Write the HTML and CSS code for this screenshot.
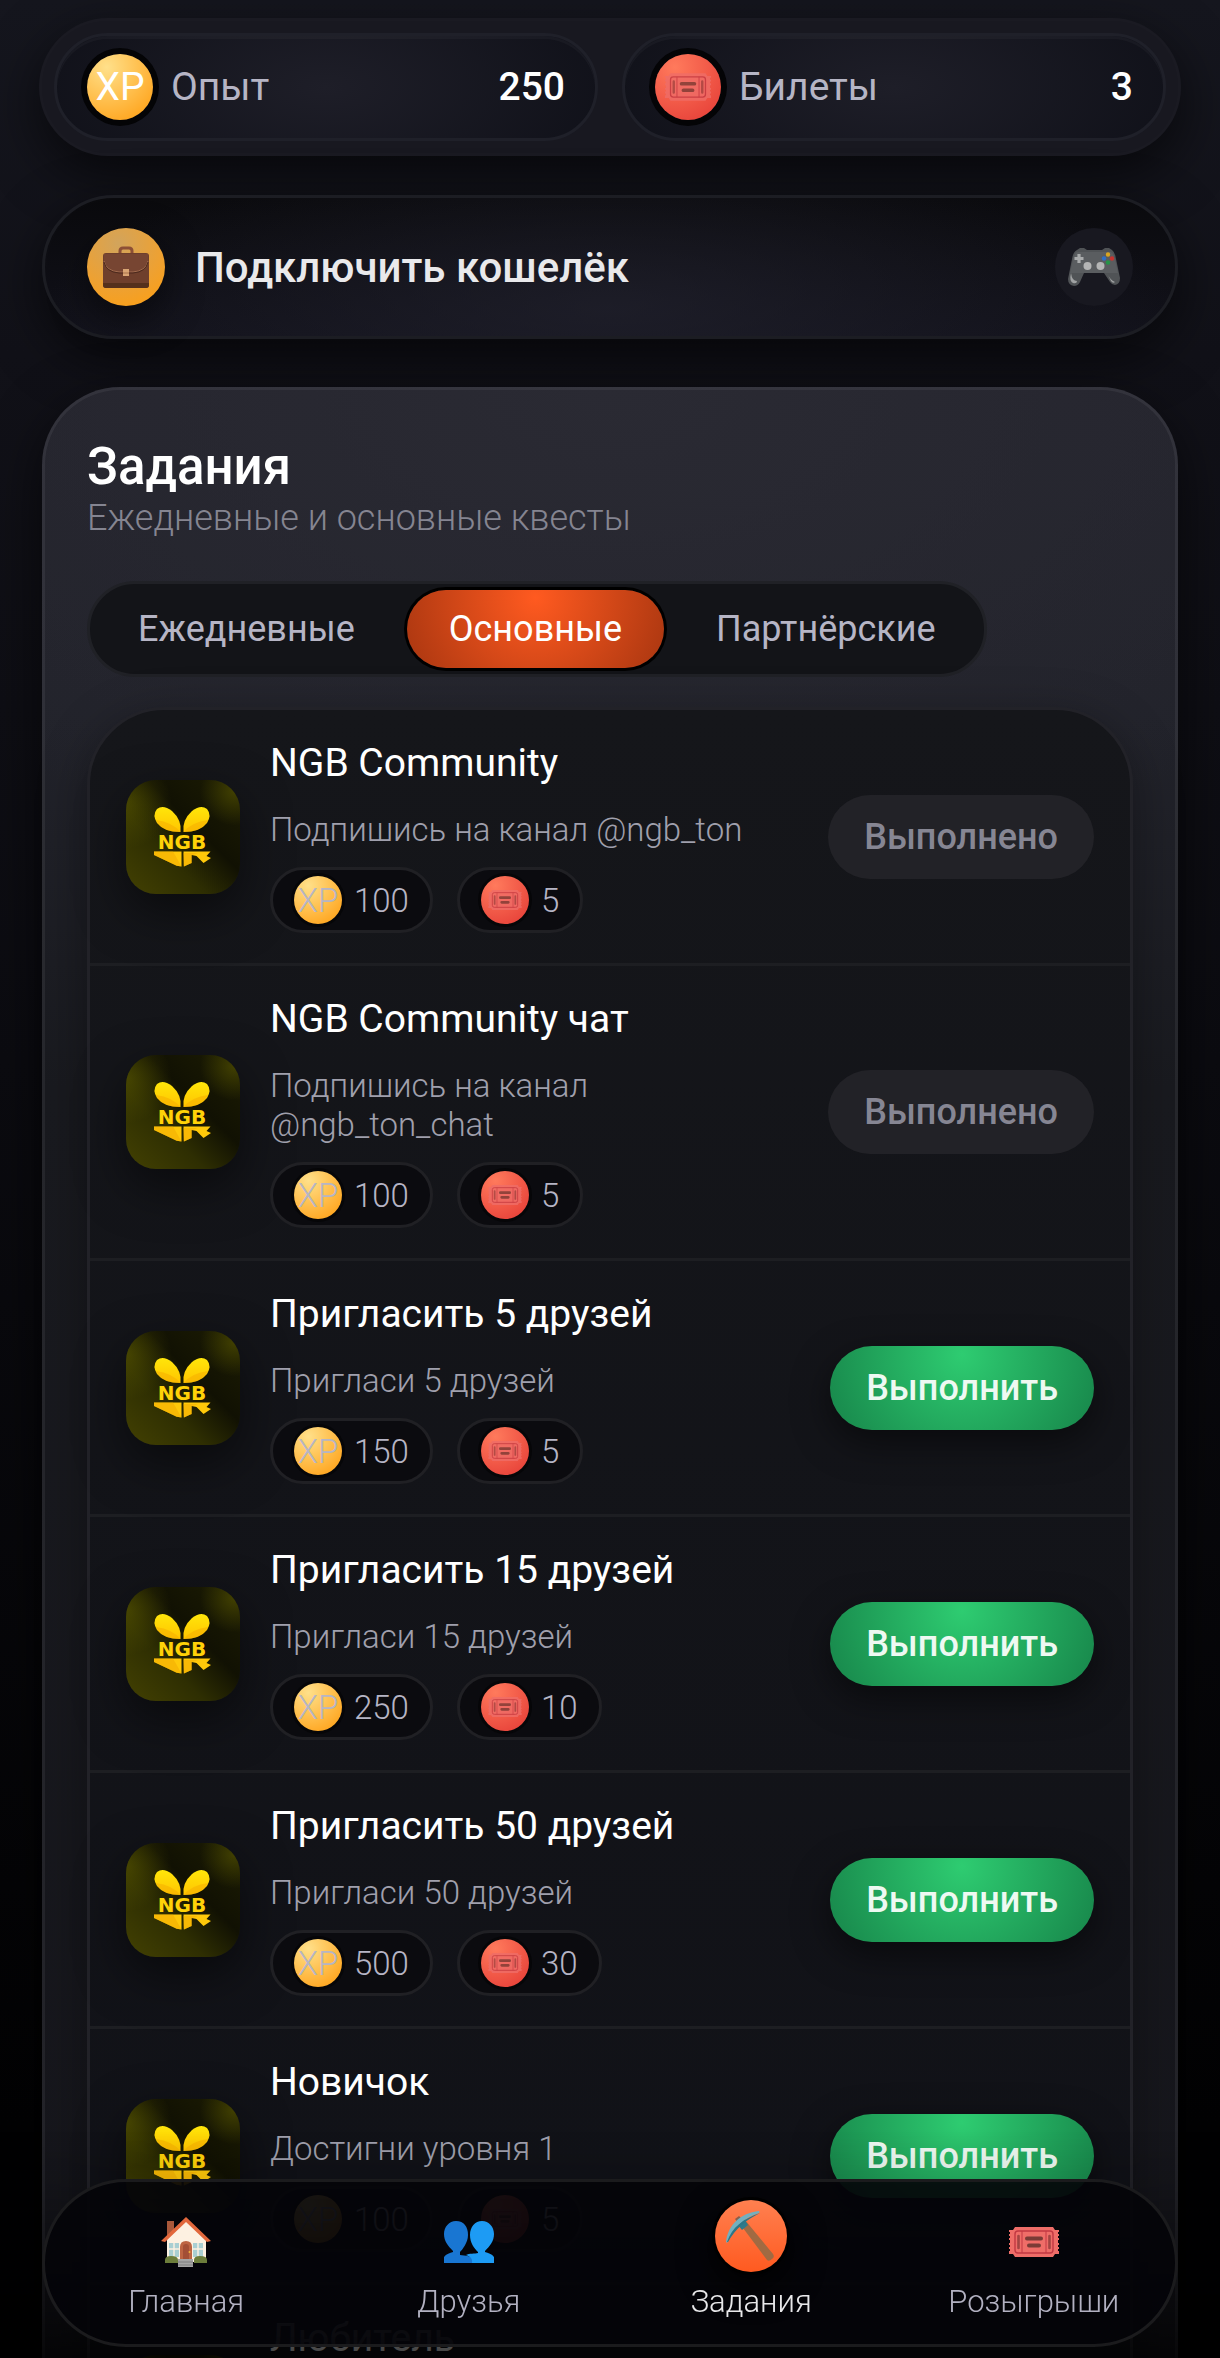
FILE: index.html
```html
<!DOCTYPE html>
<html lang="ru">
<head>
    <meta charset="UTF-8">
    <meta name="viewport" content="width=device-width, initial-scale=1.0">
    <title>Задания</title>
    <link rel="stylesheet" href="styles.css">
</head>
<body>
    <!-- Иконки -->
    <svg class="sprite" aria-hidden="true">
        <defs>
            <linearGradient id="petal" x1="0" y1="0" x2="0" y2="1">
                <stop offset="0" stop-color="#ffe60a"/>
                <stop offset="1" stop-color="#ffc400"/>
            </linearGradient>
            <linearGradient id="logoBase" x1="0" y1="1" x2="1" y2="0">
                <stop offset="0" stop-color="#434102"/>
                <stop offset="0.35" stop-color="#2e2e02"/>
                <stop offset="0.6" stop-color="#111103"/>
                <stop offset="1" stop-color="#1d1d03"/>
            </linearGradient>
            <radialGradient id="logoGlow" cx="0" cy="0.2" r="0.4">
                <stop offset="0" stop-color="#5a5800" stop-opacity="0.6"/>
                <stop offset="1" stop-color="#5a5800" stop-opacity="0"/>
            </radialGradient>
            <radialGradient id="logoCorner" cx="0.95" cy="0.1" r="0.3">
                <stop offset="0" stop-color="#5a5800" stop-opacity="0.6"/>
                <stop offset="1" stop-color="#5a5800" stop-opacity="0"/>
            </radialGradient>
        </defs>
        <symbol id="ticket" viewBox="0 0 50 30">
            <path fill="#ef6d68" d="M6 0h38l2 3h4v2h-1v2h1v2h-1v2h1v2h-1v3h1v2h-1v2h1v2h-1v2h1v3h-4l-2 3H6l-2-3H0v-3h1v-2H0v-2h1v-2H0v-2h1v-3H0v-2h1V9H0V7h1V5H0V3h4z"/>
            <rect x="6" y="4" width="38" height="22" rx="3" fill="none" stroke="#c23842" stroke-width="1.4"/>
            <path d="M13 4v22M37 4v22" stroke="#c23842" stroke-width="1"/>
            <path d="M9.500 9v12M40.500 9v12" stroke="#a34543" stroke-width="2.600" stroke-linecap="round"/>
            <path d="M18 11.500h14M20 18.500h10" stroke="#7a3b36" stroke-width="4" stroke-linecap="round"/>
        </symbol>
        <symbol id="briefcase" viewBox="0 0 46 42">
            <path d="M17 8V5q0-3 3-3h6q3 0 3 3v3" fill="none" stroke="#8c4f36" stroke-width="3"/>
            <rect x="0" y="7" width="46" height="35" rx="3" fill="#6f3f2c"/>
            <path d="M0 37h46v2q0 3-3 3H3q-3 0-3-3z" fill="#55301c"/>
            <path d="M1 8h44v8q-2 9-15 10H16Q3 25 1 16z" fill="#774532"/>
            <path d="M1 15q2 10 15 11h14q13-1 15-11" fill="none" stroke="#a36d50" stroke-width="1"/>
            <path d="M1 16q2 10 15 11h14q13-1 15-11" fill="none" stroke="#4c291c" stroke-width="1"/>
            <rect x="20" y="23" width="6" height="7" fill="#d9a574"/>
            <path d="M20 27h6" stroke="#a8734c" stroke-width="1"/>
        </symbol>
        <symbol id="gamepad" viewBox="0 0 52 38">
            <path d="M9 2l3-2h4l3 2h15l3-2h4l3 2q3 2 4 9l4 19q0 6-5 7-3 0-5-3l-6-9H16l-4 9q-2 4-6 4-6-1-6-7L4 11q1-7 5-9z" fill="#505356"/>
            <path d="M9 4h34q3 1 5 12l2 9H2L5 12q1-6 4-8z" fill="#5a5d60"/>
            <path d="M3 25q-2 8 2 10 4 1 4-2-5 0-6-8zM39 25q3 7 8 9-2 2-4-1z" fill="#a0a2a3"/>
            <path d="M11 6v9M6.500 10.500h9" stroke="#a8aaab" stroke-width="3.200"/>
            <circle cx="19.500" cy="18" r="4" fill="#b4b5b5"/>
            <circle cx="32.500" cy="18" r="4" fill="#b4b5b5"/>
            <circle cx="40" cy="6.500" r="2.200" fill="#d9a520"/>
            <circle cx="36" cy="10.500" r="2.200" fill="#2e6fc8"/>
            <circle cx="44" cy="10.500" r="2.200" fill="#c8332f"/>
            <circle cx="40" cy="14.500" r="2.200" fill="#249447"/>
        </symbol>
        <symbol id="home" viewBox="0 0 50 50">
            <path d="M6 4h7v16H6z" fill="#a9583a"/>
            <path d="M6 22L25 3l20 19v23H6z" fill="#fdf1e1"/>
            <path d="M25 0L50 24l-4 1L25 5 4 25l-4-1z" fill="#e2683c"/>
            <path d="M8 26h10v14H8zM32 26h10v14H32z" fill="#a9cfd2"/>
            <path d="M13 26v14M37 26v14M8 32h10M32 32h10" stroke="#fdf1e1" stroke-width="1.400"/>
            <path d="M19 42V30q0-6 6-6t6 6v12z" fill="#bd6442"/>
            <path d="M22 42V30q0-3 3-3t3 3v12z" fill="#a34f35"/>
            <circle cx="28.500" cy="35" r="1" fill="#f3b43b"/>
            <path d="M4 46v-3q0-4 6-4 7 0 7 4v3zM33 46v-3q0-4 6-4 7 0 7 4v3z" fill="#6c7d3b"/>
            <path d="M17 42h15v8H17z" fill="#a5a5a5"/>
            <path d="M17 45h15M17 48h15" stroke="#7f7f7f" stroke-width="1"/>
        </symbol>
        <symbol id="friends" viewBox="0 0 50 42">
            <path d="M12 0c8 0 12 6 12 14S18 29 16 31v3c5 1 13 0 13 6v2H0v-6c2-3 6-4 9-5v-1C4 25 0 20 0 13S5 0 12 0z" fill="#1976d2"/>
            <path d="M38 0c7 0 12 6 12 13s-4 12-9 17v1c3 1 7 2 9 5v6H28c1-5-3-7-6-8 3-2 9-1 12-2v-1c-4-4-8-9-8-17S31 0 38 0z" fill="#1d9bf4"/>
        </symbol>
        <symbol id="pickaxe" viewBox="0 0 50 50">
            <path d="M14 13l5-4 28 34q2 3-1 5-3 3-5 1z" fill="#a16a42"/>
            <path d="M9 8l4-3 3 3-4 4z" fill="#8a5f4b"/>
            <path d="M12 14l6-6 4 6-6 5z" fill="#2f7a8b"/>
            <path d="M0 31C2 14 14 2 33 0q1 1 0 2C20 6 7 16 2 31q-1 1-2 0z" fill="#73b0bf"/>
            <path d="M1 31C6 16 17 8 34 2 20 9 10 17 2 31z" fill="#2d7687"/>
        </symbol>
        <symbol id="ngb" viewBox="0 0 114 114">
            <rect width="114" height="114" fill="url(#logoBase)"/>
            <rect width="114" height="114" fill="url(#logoGlow)"/>
            <rect width="114" height="114" fill="url(#logoCorner)"/>
            <path d="M54.500 52Q56 40 46 31 37 24 31 29q-5 6 0 14 7 9 23.500 9z" fill="url(#petal)"/>
            <path d="M57.500 52Q56 40 66 31q9-7 15-2 5 6 0 14-7 9-23.500 9z" fill="url(#petal)"/>
            <path d="M54.500 52Q46 42 30 40q5 12 24.500 12zM57.500 52Q66 42 82 40q-5 12-24.500 12z" fill="#f5ae00" opacity="0.55"/>
            <path d="M28 71.500h27.500v15Q50 86 47 84L28 75z" fill="#ffc90a"/>
            <path d="M28 71.500h19l8.500 15Q50 86 47 84L28 75z" fill="#f2aa00" opacity="0.5"/>
            <path d="M57.500 71.500H84.500l-4 4.500 4.500 2-7.500 5-7-7-5-1v8l-7.500 3.500z" fill="#ffc90a"/>
            <path d="M57.500 73L72 73l-6 2v8l-8.500 3.500z" fill="#f2aa00" opacity="0.5"/>
        </symbol>
    </svg>

    <div class="app">
        <!-- Баланс -->
        <header class="balance">
            <div class="balance-item">
                <span class="coin coin-xp">XP</span>
                <span class="balance-label">Опыт</span>
                <span class="balance-value">250</span>
            </div>
            <div class="balance-item">
                <span class="coin coin-ticket"><svg><use href="#ticket"/></svg></span>
                <span class="balance-label">Билеты</span>
                <span class="balance-value">3</span>
            </div>
        </header>

        <button type="button" class="wallet">
            <span class="wallet-icon"><svg width="46" height="42"><use href="#briefcase"/></svg></span>
            <span class="wallet-text">Подключить кошелёк</span>
            <span class="wallet-game"><svg width="52" height="38"><use href="#gamepad"/></svg></span>
        </button>

        <!-- Задания -->
        <main class="card">
            <h1>Задания</h1>
            <p class="subtitle">Ежедневные и основные квесты</p>

            <div class="tabs">
                <button type="button" class="tab">Ежедневные</button>
                <button type="button" class="tab active">Основные</button>
                <button type="button" class="tab">Партнёрские</button>
            </div>

            <ul class="tasks">
                <li class="task">
                    <svg class="task-logo" viewBox="0 0 114 114"><use href="#ngb"/><text x="56" y="69">NGB</text></svg>
                    <div class="task-body">
                        <h2>NGB Community</h2>
                        <p>Подпишись на канал @ngb_ton</p>
                        <div class="rewards">
                            <span class="reward"><span class="coin coin-xp">XP</span>100</span>
                            <span class="reward"><span class="coin coin-ticket"><svg><use href="#ticket"/></svg></span>5</span>
                        </div>
                    </div>
                    <button type="button" class="task-button" disabled>Выполнено</button>
                </li>
                <li class="task">
                    <svg class="task-logo" viewBox="0 0 114 114"><use href="#ngb"/><text x="56" y="69">NGB</text></svg>
                    <div class="task-body">
                        <h2>NGB Community чат</h2>
                        <p>Подпишись на канал @ngb_ton_chat</p>
                        <div class="rewards">
                            <span class="reward"><span class="coin coin-xp">XP</span>100</span>
                            <span class="reward"><span class="coin coin-ticket"><svg><use href="#ticket"/></svg></span>5</span>
                        </div>
                    </div>
                    <button type="button" class="task-button" disabled>Выполнено</button>
                </li>
                <li class="task">
                    <svg class="task-logo" viewBox="0 0 114 114"><use href="#ngb"/><text x="56" y="69">NGB</text></svg>
                    <div class="task-body">
                        <h2>Пригласить 5 друзей</h2>
                        <p>Пригласи 5 друзей</p>
                        <div class="rewards">
                            <span class="reward"><span class="coin coin-xp">XP</span>150</span>
                            <span class="reward"><span class="coin coin-ticket"><svg><use href="#ticket"/></svg></span>5</span>
                        </div>
                    </div>
                    <button type="button" class="task-button">Выполнить</button>
                </li>
                <li class="task">
                    <svg class="task-logo" viewBox="0 0 114 114"><use href="#ngb"/><text x="56" y="69">NGB</text></svg>
                    <div class="task-body">
                        <h2>Пригласить 15 друзей</h2>
                        <p>Пригласи 15 друзей</p>
                        <div class="rewards">
                            <span class="reward"><span class="coin coin-xp">XP</span>250</span>
                            <span class="reward"><span class="coin coin-ticket"><svg><use href="#ticket"/></svg></span>10</span>
                        </div>
                    </div>
                    <button type="button" class="task-button">Выполнить</button>
                </li>
                <li class="task">
                    <svg class="task-logo" viewBox="0 0 114 114"><use href="#ngb"/><text x="56" y="69">NGB</text></svg>
                    <div class="task-body">
                        <h2>Пригласить 50 друзей</h2>
                        <p>Пригласи 50 друзей</p>
                        <div class="rewards">
                            <span class="reward"><span class="coin coin-xp">XP</span>500</span>
                            <span class="reward"><span class="coin coin-ticket"><svg><use href="#ticket"/></svg></span>30</span>
                        </div>
                    </div>
                    <button type="button" class="task-button">Выполнить</button>
                </li>
                <li class="task">
                    <svg class="task-logo" viewBox="0 0 114 114"><use href="#ngb"/><text x="56" y="69">NGB</text></svg>
                    <div class="task-body">
                        <h2>Новичок</h2>
                        <p>Достигни уровня 1</p>
                        <div class="rewards">
                            <span class="reward"><span class="coin coin-xp">XP</span>100</span>
                            <span class="reward"><span class="coin coin-ticket"><svg><use href="#ticket"/></svg></span>5</span>
                        </div>
                    </div>
                    <button type="button" class="task-button">Выполнить</button>
                </li>
                <li class="task">
                    <svg class="task-logo" viewBox="0 0 114 114"><use href="#ngb"/></svg>
                    <div class="task-body">
                        <h2>Любитель</h2>
                    </div>
                </li>
            </ul>
        </main>
    </div>

    <!-- Нижнее меню -->
    <div class="nav-wrap">
        <nav class="nav">
            <a href="#home" class="nav-item">
                <span class="nav-icon"><svg width="50" height="50"><use href="#home"/></svg></span>
                Главная
            </a>
            <a href="#friends" class="nav-item">
                <span class="nav-icon"><svg width="50" height="42"><use href="#friends"/></svg></span>
                Друзья
            </a>
            <a href="#tasks" class="nav-item active">
                <span class="nav-icon"><svg width="50" height="50"><use href="#pickaxe"/></svg></span>
                Задания
            </a>
            <a href="#raffles" class="nav-item">
                <span class="nav-icon"><svg width="50" height="30"><use href="#ticket"/></svg></span>
                Розыгрыши
            </a>
        </nav>
    </div>
</body>
</html>
```
FILE: styles.css
```css
* {
    box-sizing: border-box;
    margin: 0;
    padding: 0;
}
body {
    height: 100vh;
    overflow: hidden;
    font-family: Roboto, "Noto Sans", sans-serif;
    font-size: 36px;
    color: #fff;
    background: linear-gradient(#15161e, #111118 15%, #0b0b10 45%, #020203 90%);
}
button {
    font: inherit;
    color: inherit;
    border: none;
    background: none;
    cursor: pointer;
}
.sprite {
    position: absolute;
    width: 0;
    height: 0;
}
.app {
    height: 100vh;
    overflow: hidden;
    padding: 18px 42px 0;
}

/* Баланс */
.balance {
    display: flex;
    gap: 24px;
    margin: 0 -3px 39px;
    padding: 12px;
    border: 3px solid rgba(255, 255, 255, 0.01);
    border-radius: 72px;
    background: #181820;
    box-shadow: 0 18px 54px rgba(0, 0, 0, 0.6);
}
.balance-item {
    flex: 1;
    display: flex;
    align-items: center;
    gap: 18px;
    padding: 18px 30px;
    border: 3px solid #1f2029;
    border-radius: 54px;
    background: radial-gradient(ellipse 60% 150% at 50% 50%, #1e1e28, #0f1018);
    box-shadow: inset 0 3px 0 rgba(255, 255, 255, 0.03);
    font-size: 39px;
}
.balance-label {
    color: #b6b5c5;
}
.balance-value {
    margin-left: auto;
    font-weight: 500;
}

.coin {
    display: flex;
    align-items: center;
    justify-content: center;
    width: 66px;
    height: 66px;
    border-radius: 50%;
    box-shadow: 0 0 0 6px #040406;
}
.coin svg {
    width: 46px;
    height: 28px;
    opacity: 0.8;
}
.coin-xp {
    background: radial-gradient(circle at 30% 20%, #ffe08a, #ffa51e 85%);
}
.coin-ticket {
    background: radial-gradient(circle at 30% 20%, #ff7a5c, #e8433a 85%);
}

/* Кошелёк */
.wallet {
    display: flex;
    align-items: center;
    gap: 30px;
    width: 100%;
    margin-bottom: 48px;
    padding: 30px 42px;
    border: 3px solid #1c1d23;
    border-radius: 72px;
    background: radial-gradient(ellipse 50% 120% at 50% 80%, rgba(34, 34, 46, 0.7), rgba(15, 16, 24, 0)), linear-gradient(#0a0a0d, #12121b);
    box-shadow: 0 18px 54px rgba(0, 0, 0, 0.6);
    font-size: 42px;
    font-weight: 500;
    color: #e9e9eb;
}
.wallet-icon,
.wallet-game {
    display: flex;
    align-items: center;
    justify-content: center;
    width: 78px;
    height: 78px;
    border-radius: 50%;
}
.wallet-icon {
    background: radial-gradient(circle at 40% 20%, #d2a45c, #eda133 55%, #fb9f16 90%);
    box-shadow: 0 12px 36px rgba(0, 0, 0, 0.5);
}
.wallet-game {
    margin-left: auto;
    background: #181820;
}

/* Карточка заданий */
.card {
    padding: 47px 42px;
    border: 3px solid rgba(255, 255, 255, 0.06);
    border-radius: 78px;
    background: radial-gradient(ellipse 900px 500px at 50% 0, #2a2a33, rgba(35, 35, 44, 0)), linear-gradient(#24242d, #22232b 330px, #191a1f 700px, #15151b);
    background-origin: border-box;
    box-shadow: 0 18px 54px rgba(0, 0, 0, 0.6);
}
h1 {
    font-size: 51px;
    font-weight: 500;
    line-height: 60px;
}
.subtitle {
    margin-bottom: 42px;
    font-weight: 300;
    line-height: 42px;
    color: #858591;
}
.tabs {
    display: flex;
    gap: 10px;
    width: fit-content;
    margin-bottom: 30px;
    padding: 6px;
    border: 3px solid #202126;
    border-radius: 48px;
    background: #131418;
}
.tab {
    padding: 18px 42px;
    border-radius: 39px;
    line-height: 42px;
    color: #b6b5c5;
}
.tab.active {
    background: radial-gradient(circle at 50% 10%, #ff5a20, #a93610);
    box-shadow: 0 0 0 3px #000;
    color: #fff;
}

.tasks {
    list-style: none;
    border: 3px solid #222228;
    border-radius: 78px;
    background: linear-gradient(#15161a, #101117);
    box-shadow: 0 12px 48px rgba(0, 0, 0, 0.35);
}
.task {
    display: flex;
    align-items: center;
    gap: 30px;
    padding: 30px 36px;
    border-bottom: 3px solid #1d1e22;
}
.task-logo {
    flex: none;
    width: 114px;
    height: 114px;
    border-radius: 30px;
    box-shadow: 0 18px 48px rgba(0, 0, 0, 0.5);
}
.task-logo text {
    font-family: "DejaVu Sans", sans-serif;
    font-size: 20px;
    font-weight: 700;
    text-anchor: middle;
    fill: #ffd208;
}
.task-body {
    flex: 1;
    min-height: 193px;
}
h2 {
    margin-bottom: 24px;
    font-size: 39px;
    font-weight: 400;
    line-height: 46px;
}
.task p {
    margin-bottom: 18px;
    font-size: 33px;
    font-weight: 300;
    line-height: 39px;
    color: #a0a0ad;
}
.rewards {
    display: flex;
    gap: 24px;
}
.reward {
    display: flex;
    align-items: center;
    gap: 12px;
    padding: 6px 21px;
    border: 3px solid #202024;
    border-radius: 33px;
    background: #0b0b0f;
    font-size: 33px;
    font-weight: 300;
    color: #b6b5c5;
}
.reward .coin {
    width: 48px;
    height: 48px;
    box-shadow: 0 0 0 3px #060608;
}
.reward .coin svg {
    width: 34px;
    height: 20px;
}
.task-button {
    flex: none;
    padding: 21px 36px;
    border-radius: 42px;
    background: radial-gradient(circle at 50% 10%, #2ecc71, #17854a);
    box-shadow: 0 12px 36px rgba(0, 0, 0, 0.5);
    font-weight: 500;
    line-height: 42px;
    color: #eef9f2;
}
.task-button:disabled {
    background: #222227;
    box-shadow: none;
    color: #868693;
    cursor: default;
}

/* Нижнее меню */
.nav-wrap {
    position: fixed;
    right: 0;
    bottom: 0;
    left: 0;
    padding: 48px 42px 11px;
    background: linear-gradient(rgba(0, 0, 0, 0), rgba(0, 0, 0, 0.1) 25%, rgba(0, 0, 0, 0.75));
}
.nav {
    display: flex;
    padding: 18px 0 24px;
    border: 3px solid #1b1b1d;
    border-radius: 84px;
    background: rgba(4, 4, 9, 0.92);
}
.nav-item {
    flex: 1;
    display: flex;
    flex-direction: column;
    align-items: center;
    gap: 12px;
    font-size: 31px;
    font-weight: 300;
    line-height: 36px;
    color: #b2b1c1;
    text-decoration: none;
}
.nav-icon {
    display: flex;
    align-items: center;
    justify-content: center;
    width: 72px;
    height: 72px;
    padding-top: 12px;
    border-radius: 50%;
}
.nav-item.active {
    color: #e8e8ea;
}
.active .nav-icon {
    padding-top: 0;
    background: linear-gradient(#ff8050, #ff5a20);
    box-shadow: 0 0 0 3px #000, 0 12px 36px #000;
}
```
